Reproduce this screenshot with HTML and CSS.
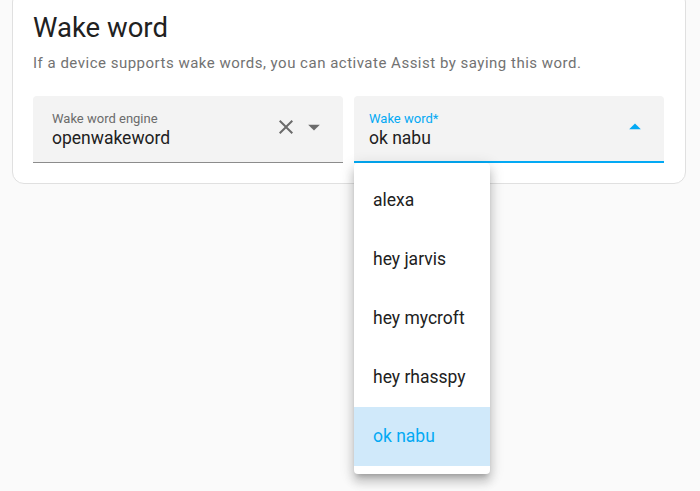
FILE: index.html
```html
<!doctype html>
<html lang="en">
<head>
    <meta charset="UTF-8" />
    <title>Wake word</title>
    <link rel="stylesheet" href="styles.css">
</head>
<body>
<div class="card">
    <h2 class="card-title">Wake word</h2>
    <p class="card-desc">If a device supports wake words, you can activate Assist by saying this word.</p>
    <div class="fields">
        <div class="field">
            <div class="field-text">
                <span class="field-label">Wake word engine</span>
                <span class="field-value">openwakeword</span>
            </div>
            <svg class="icon-clear" viewBox="0 0 24 24"><path d="M19 6.41 17.59 5 12 10.59 6.41 5 5 6.41 10.59 12 5 17.59 6.41 19 12 13.41 17.59 19 19 17.59 13.41 12z"/></svg>
            <svg class="icon-drop" viewBox="0 0 24 24"><path d="M7 10l5 5 5-5z"/></svg>
        </div>
        <div class="field field-open">
            <div class="field-text">
                <span class="field-label">Wake word*</span>
                <span class="field-value">ok nabu</span>
            </div>
            <svg class="icon-drop" viewBox="0 0 24 24"><path d="M7 14l5-5 5 5z"/></svg>
            <ul class="menu">
                <li>alexa</li>
                <li>hey jarvis</li>
                <li>hey mycroft</li>
                <li>hey rhasspy</li>
                <li class="selected">ok nabu</li>
            </ul>
        </div>
    </div>
</div>
</body>
</html>
```

FILE: styles.css
```css
html,body {
    margin: 0;
    padding: 0;
    background: #fafafa;
    font-family: Roboto, "Noto Sans", sans-serif;
    color: #212121;
}
body {
    min-height: 100vh;
    padding: 0 12px;
    overflow: hidden;
}
.card {
    width: 674px;
    box-sizing: border-box;
    margin-top: -10px;
    padding: 21px 20px 20px;
    background: white;
    border: 1px solid #e0e0e0;
    border-radius: 12px;
}
.card-title {
    margin: 0;
    font-size: 27.5px;
    font-weight: 400;
    line-height: 32px;
}
.card-desc {
    margin: 9px 0 23px;
    font-size: 15px;
    line-height: 20px;
    color: #727272;
    letter-spacing: 0.5px;
}
.fields {
    display: grid;
    grid-template-columns: 310px 310px;
    gap: 11px;
}
.field {
    position: relative;
    display: flex;
    align-items: center;
    height: 67px;
    box-sizing: border-box;
    padding: 0 16px 0 19px;
    background: #f3f3f3;
    border-radius: 4px 4px 0 0;
    border-bottom: 1px solid #8c8c8c;
}
.field-open {
    padding-left: 15px;
    border-bottom: 2px solid #03a9f4;
}
.field-text {
    flex: 1;
    display: flex;
    flex-direction: column;
    align-self: flex-start;
    padding-top: 15px;
}
.field-label {
    font-size: 13px;
    line-height: 16px;
    color: #6b6b6b;
}
.field-open .field-label {
    color: #03a9f4;
}
.field-value {
    font-size: 17.5px;
    line-height: 22px;
}
.icon-clear {
    width: 24px;
    height: 24px;
    fill: #6b6b6b;
    margin: -4px 2px 0 0;
}
.icon-drop {
    width: 28px;
    height: 28px;
    fill: #6b6b6b;
    margin: -4px -1px 0 0;
}
.field-open .icon-drop {
    fill: #03a9f4;
}
.menu {
    position: absolute;
    top: calc(100% + 2px);
    left: 0;
    width: 136px;
    margin: 0;
    padding: 8px 0;
    list-style: none;
    background: white;
    border-radius: 4px;
    box-shadow: 0 5px 5px -3px rgba(0,0,0,.2), 0 8px 10px 1px rgba(0,0,0,.14), 0 3px 14px 2px rgba(0,0,0,.12);
    z-index: 5;
}
.menu li {
    height: 59px;
    line-height: 59px;
    padding-left: 19px;
    font-size: 17.5px;
}
.menu .selected {
    background: #d0e9fa;
    color: #03a9f4;
}
```
